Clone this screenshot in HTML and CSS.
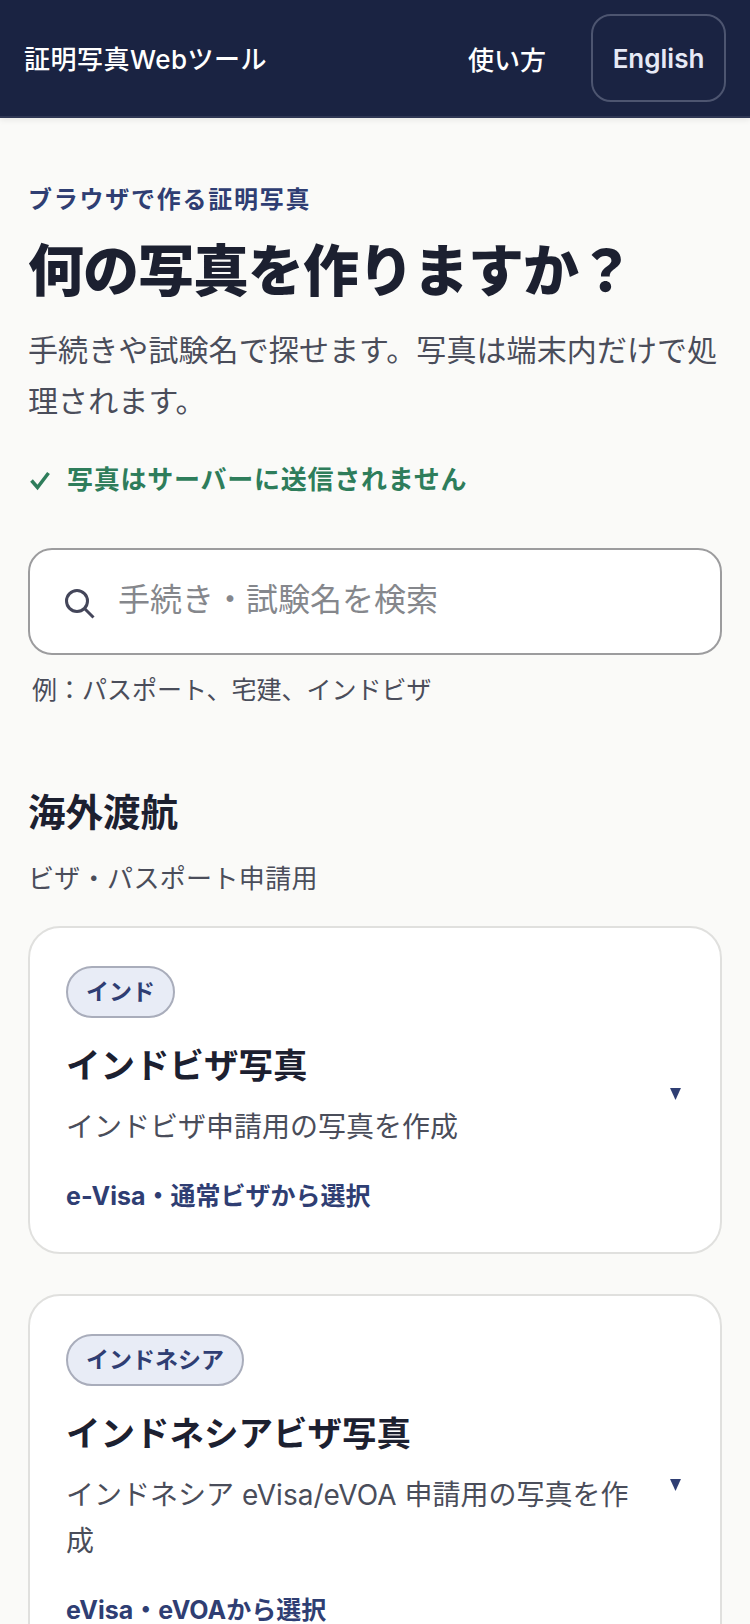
FILE: index.html
```html
<!DOCTYPE html>
<html lang="ja">
<head>
<meta charset="utf-8">
<title>証明写真Webツール</title>
<link rel="stylesheet" href="styles.css">
</head>
<body>
<header class="topbar">
  <a class="brand">証明写真Webツール</a>
  <nav class="topnav">
    <a class="navlink">使い方</a>
    <a class="langbtn">English</a>
  </nav>
</header>
<main class="page">
  <p class="eyebrow">ブラウザで作る証明写真</p>
  <h1 class="headline">何の写真を作りますか？</h1>
  <p class="lead">手続きや試験名で探せます。写真は端末内だけで処理されます。</p>
  <p class="privacy">
    <svg class="privacy-icon" viewBox="0 0 24 24" aria-hidden="true"><path d="M3.5 12.5 L9.5 19.5 L20.5 5"/></svg>
    <span>写真はサーバーに送信されません</span>
  </p>
  <div class="search">
    <svg class="search-icon" viewBox="0 0 30 30" aria-hidden="true"><circle cx="12" cy="12" r="10.5"/><path d="M19.5 19.5 L28.5 28.5"/></svg>
    <span class="search-placeholder">手続き・試験名を検索</span>
  </div>
  <p class="hint">例：パスポート、宅建、インドビザ</p>
  <section class="group">
    <h2 class="group-title">海外渡航</h2>
    <p class="group-sub">ビザ・パスポート申請用</p>
    <div class="cards">
      <article class="card">
        <div class="card-body">
          <span class="badge">インド</span>
          <h3 class="card-title">インドビザ写真</h3>
          <p class="card-desc">インドビザ申請用の写真を作成</p>
          <p class="card-meta">e-Visa・通常ビザから選択</p>
        </div>
        <svg class="caret" viewBox="0 0 10 11" aria-hidden="true"><path d="M0 0 H10 L5 11 Z"/></svg>
      </article>
      <article class="card">
        <div class="card-body">
          <span class="badge">インドネシア</span>
          <h3 class="card-title">インドネシアビザ写真</h3>
          <p class="card-desc">インドネシア eVisa/eVOA 申請用の写真を作成</p>
          <p class="card-meta">eVisa・eVOAから選択</p>
        </div>
        <svg class="caret" viewBox="0 0 10 11" aria-hidden="true"><path d="M0 0 H10 L5 11 Z"/></svg>
      </article>
    </div>
  </section>
</main>
</body>
</html>
```
FILE: styles.css
```css
* { box-sizing: border-box; }
html, body { margin: 0; padding: 0; height: 1624px; overflow: hidden; }
body {
  background: #fafaf8;
  color: #1c2030;
  font-family: Inter, "Noto Sans CJK JP", sans-serif;
}
p, h1, h2, h3 { margin: 0; }

.topbar {
  height: 118px;
  background: #1a2342;
  border-bottom: 2px solid #2f3754;
  box-shadow: 0 2px 6px rgba(0,0,0,.08);
  display: flex;
  align-items: center;
  justify-content: space-between;
  padding: 0 24px;
}
.brand { color: #fff; font-size: 26px; font-weight: 500; letter-spacing: .5px; padding-bottom: 2px; }
.topnav { display: flex; align-items: center; gap: 45px; }
.navlink { color: #fff; font-size: 26px; font-weight: 500; }
.langbtn {
  width: 135px;
  height: 88px;
  display: flex;
  align-items: center;
  justify-content: center;
  border: 2px solid #4d5570;
  border-radius: 20px;
  color: #e6e9f5;
  font-size: 26px;
  font-weight: 600;
}

.page { padding: 66px 28px 0; }
.eyebrow { color: #2f3e73; font-size: 24px; font-weight: 700; letter-spacing: 1.75px; line-height: 32px; }
.headline { font-size: 56px; font-weight: 900; letter-spacing: -1px; line-height: 78px; margin-top: 16px; }
.lead { color: #4a4d5a; font-size: 30px; letter-spacing: .1px; line-height: 51px; margin-top: 15px; }
.privacy { display: flex; align-items: center; gap: 15px; color: #2e7d5b; font-size: 26px; font-weight: 700; margin-top: 33px; line-height: 40px; letter-spacing: .75px; }
.privacy-icon { width: 24px; height: 24px; fill: none; stroke: #2e7d5b; stroke-width: 3.5; }

.search {
  height: 107px;
  margin-top: 48px;
  display: flex;
  align-items: center;
  gap: 23px;
  padding: 0 35px;
  background: #fff;
  border: 2px solid #9c9c9e;
  border-radius: 24px;
}
.search-icon { width: 30px; height: 30px; margin-top: 4px; fill: none; stroke: #44465a; stroke-width: 3; }
.search-placeholder { color: #85878c; font-size: 32px; padding-bottom: 10px; }
.hint { color: #4a4d5a; font-size: 25px; line-height: 40px; margin-top: 15px; padding-left: 4px; }

.group { margin-top: 78px; }
.group-title { font-size: 37.5px; font-weight: 700; line-height: 50px; }
.group-sub { color: #4a4d5a; font-size: 26px; line-height: 40px; margin-top: 21px; letter-spacing: .35px; }
.cards { display: flex; flex-direction: column; gap: 40px; margin-top: 27px; }
.card {
  display: flex;
  align-items: center;
  gap: 20px;
  padding: 38px 36px 36px;
  background: #fff;
  border: 2px solid #e0e0de;
  border-radius: 32px;
}
.card-body { flex: 1; min-width: 0; }
.badge {
  display: inline-block;
  height: 52px;
  padding: 0 18px;
  background: #e8ecf6;
  border: 2px solid #a9adbb;
  border-radius: 26px;
  color: #2f3e73;
  font-size: 23px;
  font-weight: 700;
  line-height: 48px;
}
.card-title { font-size: 34.5px; font-weight: 700; line-height: 48px; margin-top: 24px; }
.card-desc { color: #4a4d5a; font-size: 28px; line-height: 46px; margin-top: 14px; }
.card-meta { color: #2f3e73; font-size: 25px; font-weight: 700; line-height: 40px; margin-top: 26px; }
.caret { width: 11px; height: 12px; margin: 6px 3px 0 0; flex: none; fill: #2f3e73; }
```
